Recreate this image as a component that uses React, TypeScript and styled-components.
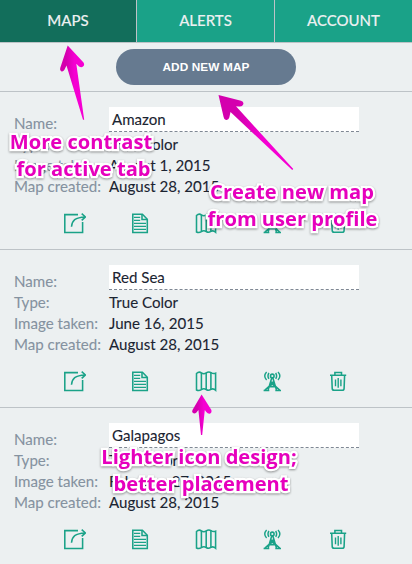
import React from 'react';
import styled, { createGlobalStyle } from 'styled-components';

const GlobalStyle = createGlobalStyle`
  * { box-sizing: border-box; }
  body { margin: 0; background: #ecf0f1; font-family: Lato, sans-serif; }
`;

const Page = styled.div`
  position: relative;
  width: 412px;
  height: 564px;
  overflow: hidden;
  background: #ecf0f1;
`;

const Tabs = styled.nav`
  display: grid;
  grid-template-columns: 137px 138px 137px;
  height: 43px;
  border-bottom: 1px solid #bdc3c7;
`;

const Tab = styled.button<{ $active?: boolean }>`
  border: 0;
  border-right: 1px solid #bdc3c7;
  padding: 0 0 2px;
  background: ${(p) => (p.$active ? '#126e5b' : '#1aa288')};
  color: #ecf0f1;
  font: 500 15px Lato, sans-serif;
  -webkit-text-stroke: 0.12px currentColor;
  &:last-child { border-right: 0; }
`;

const Toolbar = styled.div`
  display: flex;
  justify-content: center;
  height: 49px;
  padding-top: 6px;
  border-bottom: 1px solid #bdc3c7;
`;

const AddButton = styled.button`
  width: 180px;
  height: 36px;
  border: 0;
  border-radius: 18px;
  padding: 0;
  background: #667a90;
  color: #fff;
  font: bold 11.8px 'Liberation Sans', sans-serif;
  letter-spacing: 0.12px;
`;

const Card = styled.section`
  height: 158px;
  padding-top: 15px;
  border-bottom: 1px solid #bdc3c7;
`;

const Fields = styled.dl`
  display: grid;
  grid-template-columns: 95px 250px;
  grid-template-rows: 27px repeat(3, 21px);
  margin: 0 0 0 14px;
  font-size: 15.1px;
  line-height: 21px;
  -webkit-text-stroke: 0.1px currentColor;
`;

const Label = styled.dt`
  align-self: end;
  color: #8592a0;
  white-space: nowrap;
`;

const Value = styled.dd`
  margin: 0;
  color: #1b2431;
  white-space: nowrap;
`;

const NameValue = styled(Value)`
  height: 25px;
  padding: 2px 3px 0;
  background: #fff;
  border-bottom: 1px dashed #7f8894;
`;

const Actions = styled.div`
  display: flex;
  gap: 42px;
  margin: 14px 0 0 62px;
`;

const Action = styled.button`
  display: flex;
  width: 24px;
  height: 24px;
  padding: 0;
  border: 0;
  background: none;
  color: #1aa288;
`;

const Glyph = styled.svg`
  width: 24px;
  height: 24px;
  fill: none;
  stroke: currentColor;
  stroke-width: 1.55;
`;

const Note = styled.p<{ $x: number; $y: number; $w: number }>`
  position: absolute;
  left: ${(p) => p.$x}px;
  top: ${(p) => p.$y}px;
  width: ${(p) => p.$w}px;
  margin: 0;
  text-align: center;
  white-space: nowrap;
  color: #e600bd;
  font: bold 20.1px/27.4px 'Open Sans', sans-serif;
  -webkit-text-stroke: 4.5px #fff;
  paint-order: stroke fill;
  filter: drop-shadow(0 1px 1px rgba(0, 0, 0, 0.4));
`;

const NoteLine = styled.span<{ $indent?: number }>`
  display: block;
  padding-left: ${(p) => p.$indent ?? 0}px;
`;

const Arrows = styled.svg`
  position: absolute;
  inset: 0;
  pointer-events: none;
`;

const ShareIcon = () => (
  <Glyph viewBox="0 0 24 24">
    <path d="M16 3.6H2.8V21.4H20.6V11" />
    <path d="M9.5 15.8C10 9.6 13 6.3 23.2 5.9M19.7 2.6L23.4 5.9L19.7 9.4" />
  </Glyph>
);

const DocumentIcon = () => (
  <Glyph viewBox="0 0 24 24">
    <path d="M4.8 3.3H14.4L19.3 8.2V21.4H4.8Z" />
    <path d="M14 3.5V8.5H19" />
    <path strokeWidth="1.3" d="M6 6.4H12.2M6 9.4H12.2M6 12.4H18M6 15.4H18M6 18.4H18" />
  </Glyph>
);

const MapIcon = () => (
  <Glyph viewBox="0 0 24 24">
    <path d="M2.5 4.5Q5 2.1 7.4 3.9Q9.8 5.7 12.2 3.9Q14.7 2.1 17 3.6Q19.3 5.2 21.6 4.2V21.3Q19.2 19 16.9 20.4Q14.5 22.1 12.2 20.5Q9.8 19 7.4 20.6Q5 22.1 2.5 21Z" />
    <path d="M7.4 3.9V20.6M12.2 3.9V20.5M16.9 3.6V20.4" />
  </Glyph>
);

const TowerIcon = () => (
  <Glyph viewBox="0 0 24 24">
    <circle cx="12.3" cy="6.9" r="1.8" />
    <path d="M11.8 8.7L8.2 20.8M12.8 8.7L16.4 20.8M10.3 13.2H14.3M9.3 17.4L14.2 13.2M15.3 17.4L10.4 13.2M8.8 17.6H15.8M3.6 21.5H9.3M15.3 21.5H21M4.9 21.1L9.1 17.3M19.7 21.1L15.5 17.3" />
    <path strokeWidth="1.4" d="M8.9 3.8Q7 6.9 8.9 9.9M15.7 3.8Q17.6 6.9 15.7 9.9M6.6 2.9Q2.9 6.9 6.6 10.9M18 2.9Q21.7 6.9 18 10.9" />
  </Glyph>
);

const TrashIcon = () => (
  <Glyph viewBox="0 0 24 24">
    <path d="M4 6.2H20.2M8.9 5.8V3.5H15.5V5.8M5.7 6.2L6.2 19.4Q6.3 21.3 8 21.3H16.3Q18 21.3 18.1 19.4L18.6 6.2" />
    <path strokeWidth="1.4" d="M9.5 10.5V17.2M12.2 8.9V18.8M14.9 10.5V17.2" />
  </Glyph>
);

const actions = [
  { label: 'Share', Icon: ShareIcon },
  { label: 'Details', Icon: DocumentIcon },
  { label: 'View map', Icon: MapIcon },
  { label: 'Alerts', Icon: TowerIcon },
  { label: 'Delete', Icon: TrashIcon },
];

const maps = [
  { name: 'Amazon', type: 'True Color', taken: 'August 1, 2015', created: 'August 28, 2015' },
  { name: 'Red Sea', type: 'True Color', taken: 'June 16, 2015', created: 'August 28, 2015' },
  { name: 'Galapagos', type: 'True Color', taken: 'February 27, 2015', created: 'August 28, 2015' },
];

export default function App() {
  return (
    <Page>
      <GlobalStyle />
      <Tabs>
        <Tab $active>MAPS</Tab>
        <Tab>ALERTS</Tab>
        <Tab>ACCOUNT</Tab>
      </Tabs>
      <Toolbar>
        <AddButton>ADD NEW MAP</AddButton>
      </Toolbar>
      {maps.map((map) => (
        <Card key={map.name}>
          <Fields>
            <Label>Name:</Label>
            <NameValue>{map.name}</NameValue>
            <Label>Type:</Label>
            <Value>{map.type}</Value>
            <Label>Image taken:</Label>
            <Value>{map.taken}</Value>
            <Label>Map created:</Label>
            <Value>{map.created}</Value>
          </Fields>
          <Actions>
            {actions.map(({ label, Icon }) => (
              <Action key={label} aria-label={label}>
                <Icon />
              </Action>
            ))}
          </Actions>
        </Card>
      ))}
      <Arrows width="412" height="564" viewBox="0 0 412 564">
        <defs>
          <linearGradient id="pink" x1="0" y1="0" x2="1" y2="0">
            <stop offset="0.25" stopColor="#d400ae" />
            <stop offset="0.6" stopColor="#f500d2" />
          </linearGradient>
        </defs>
        <g fill="url(#pink)">
          <path d="M67.7 45.5L83.5 62.5Q85 65 83 66.5Q81.5 67.8 79 66.5L76.3 63.8L84.2 119.7H83L66.5 65.5L64.3 70Q63 72 61.2 71.2Q59.6 70.5 60.2 68Z" />
          <path d="M218.5 95L241 100.7Q244 101.7 243.3 104.3Q242.4 106.7 239.5 106.5L236 106.3L293.3 169L292.2 170L230.5 112L229.3 117.5Q228.5 120.3 226 119.9Q224 119.5 223.6 117Z" />
          <path d="M201.6 394.5L211.4 410Q212 413.2 209.6 413.8Q207.8 414 206.3 412L204.8 410L202.2 435H201L198.4 410L196.2 412.8Q194.3 414.2 192.7 412.8Q191.6 411.6 192.5 410Z" />
        </g>
      </Arrows>
      <Note $x={1} $y={128} $w={160}>
        <NoteLine>More contrast</NoteLine>
        <NoteLine $indent={5}>for active tab</NoteLine>
      </Note>
      <Note $x={202} $y={178} $w={180}>
        <NoteLine>Create new map</NoteLine>
        <NoteLine $indent={1}>from user profile</NoteLine>
      </Note>
      <Note $x={89} $y={443} $w={220}>
        <NoteLine>Lighter icon design;</NoteLine>
        <NoteLine $indent={4}>better placement</NoteLine>
      </Note>
    </Page>
  );
}
